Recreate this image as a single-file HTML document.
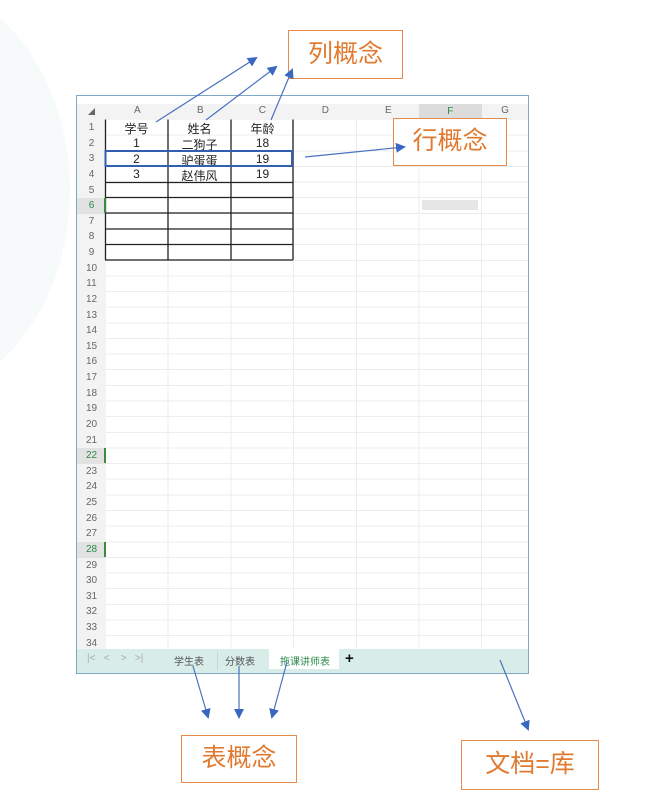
<!DOCTYPE html>
<html><head><meta charset="utf-8"><style>
body{margin:0;width:669px;height:803px;background:#fff;position:relative;overflow:hidden;font-family:"Liberation Sans","Noto Sans CJK SC",sans-serif}
.blob{position:absolute;left:-260px;top:-20px;width:330px;height:420px;border-radius:50%;background:#f6fafa}
.frame{position:absolute;left:76px;top:95px;width:451px;height:577px;border:1.5px solid #7fa8c8;background:#fff}
.colhdr{position:absolute;left:0;top:8px;width:451px;height:16px;background:#f3f3f3}
.colhdr span{position:absolute;top:1px;font-size:10px;color:#666;width:62.7px;text-align:center}
.rowhdr{position:absolute;left:0;top:24px;width:29px;height:530px;background:#f3f3f3}
.rowhdr div{height:15.64px;line-height:15.64px;font-size:10px;color:#666;text-align:center}
.cells{position:absolute;left:29px;top:24px;width:422px;height:530px;
background-image:repeating-linear-gradient(to bottom,transparent 0,transparent 14.64px,#ececec 14.64px,#ececec 15.64px),repeating-linear-gradient(to right,transparent 0,transparent 61.7px,#ececec 61.7px,#ececec 62.7px)}
.tabs{position:absolute;left:0;top:553px;width:451px;height:24px;background:#d8ece8;font-size:10px;color:#555}
.tabs span{position:absolute;top:4px}
.lbl{position:absolute;border:1.5px solid #e9894a;color:#e07a30;font-size:25px;text-align:center;box-sizing:border-box;background:#fff}
.t{position:absolute;font-size:12px;color:#222;text-align:center;width:63px}
svg{z-index:5}
</style></head><body>
<div class="blob"></div>
<div class="frame">
 <div class="colhdr">
  <span style="left:0;width:29px;font-size:7px;top:3px">◢</span>
  <span style="left:29px">A</span><span style="left:92px">B</span><span style="left:154px">C</span><span style="left:217px">D</span><span style="left:280px">E</span>
  <span style="left:342px;background:#dcdcdc;height:15px;color:#2a8a4a;border-bottom:2px solid #3d8a3d;top:0;line-height:16px">F</span><span style="left:405px;width:46px">G</span>
 </div>
 <div class="rowhdr">
  <div>1</div><div>2</div><div>3</div><div>4</div><div>5</div><div style="color:#2a8a4a;background:#e2e2e2">6</div><div>7</div><div>8</div><div>9</div><div>10</div><div>11</div><div>12</div><div>13</div><div>14</div><div>15</div><div>16</div><div>17</div><div>18</div><div>19</div><div>20</div><div>21</div><div style="color:#2a8a4a;background:#e2e2e2">22</div><div>23</div><div>24</div><div>25</div><div>26</div><div>27</div><div style="color:#2a8a4a;background:#e2e2e2">28</div><div>29</div><div>30</div><div>31</div><div>32</div><div>33</div><div>34</div>
 </div>
 <div class="cells"></div>
 <div class="tabs">
  <span style="left:10px;color:#aaa">|&lt;&nbsp;&nbsp;&nbsp;&lt;&nbsp;&nbsp;&nbsp;&nbsp;&gt;&nbsp;&nbsp;&nbsp;&gt;|</span>
  <span style="left:97px">学生表</span>
  <span style="left:140px;top:3px;height:18px;border-left:1px solid #c5d8d4"></span>
  <span style="left:148px">分数表</span>
  <span style="left:192px;top:0;width:70px;height:20px;background:#fff"></span>
  <span style="left:203px;color:#2a8a4a">拖课讲师表</span>
  <span style="left:268px;top:1px;font-size:15px;color:#111;font-weight:bold">+</span>
 </div>
</div>
<div class="t" style="left:105px;top:120px">学号</div><div class="t" style="left:168px;top:120px">姓名</div><div class="t" style="left:231px;top:120px">年龄</div>
<div class="t" style="left:105px;top:136px">1</div><div class="t" style="left:168px;top:136px">二狗子</div><div class="t" style="left:231px;top:136px">18</div>
<div class="t" style="left:105px;top:152px">2</div><div class="t" style="left:168px;top:152px">驴蛋蛋</div><div class="t" style="left:231px;top:152px">19</div>
<div class="t" style="left:105px;top:167px">3</div><div class="t" style="left:168px;top:167px">赵伟风</div><div class="t" style="left:231px;top:167px">19</div>
<div class="lbl" style="left:288px;top:30px;width:115px;height:49px;line-height:46px">列概念</div>
<div class="lbl" style="left:393px;top:118px;width:114px;height:48px;line-height:45px">行概念</div>
<div class="lbl" style="left:181px;top:735px;width:116px;height:48px;line-height:45px">表概念</div>
<div class="lbl" style="left:461px;top:740px;width:138px;height:50px;line-height:47px">文档=库</div>
<svg width="669" height="803" style="position:absolute;left:0;top:0">
 <g stroke="#222" stroke-width="1.3">
  <line x1="105.5" y1="119.5" x2="105.5" y2="260"/><line x1="168" y1="119.5" x2="168" y2="260"/><line x1="231" y1="119.5" x2="231" y2="260"/><line x1="293" y1="119.5" x2="293" y2="260"/>
  <line x1="105" y1="182.5" x2="293" y2="182.5"/><line x1="105" y1="197.5" x2="293" y2="197.5"/><line x1="105" y1="213" x2="293" y2="213"/><line x1="105" y1="229" x2="293" y2="229"/><line x1="105" y1="244.5" x2="293" y2="244.5"/><line x1="105" y1="260" x2="293" y2="260"/>
 </g>
 <rect x="105.5" y="151" width="186.5" height="15" fill="none" stroke="#2f5fae" stroke-width="2"/>
 <rect x="104" y="198" width="2" height="15" fill="#3d8a3d"/>
 <rect x="104" y="448" width="2" height="15" fill="#3d8a3d"/>
 <rect x="104" y="542" width="2" height="15" fill="#3d8a3d"/>
 <rect x="422" y="200" width="56" height="10" fill="#e6e6e6"/>
 <defs><marker id="a" markerWidth="10" markerHeight="10" refX="8" refY="5" orient="auto" markerUnits="userSpaceOnUse"><path d="M0,0 L10,5 L0,10 z" fill="#3a68c0"/></marker></defs>
 <g stroke="#4a72c0" stroke-width="1.2" fill="none" marker-end="url(#a)">
  <line x1="156" y1="122" x2="256" y2="58"/>
  <line x1="206" y1="120" x2="276" y2="67"/>
  <line x1="271" y1="120" x2="292" y2="70"/>
  <line x1="305" y1="157" x2="404" y2="147"/>
  <line x1="193" y1="666" x2="208" y2="717"/>
  <line x1="239" y1="666" x2="239" y2="717"/>
  <line x1="287" y1="662" x2="272" y2="717"/>
  <line x1="500" y1="660" x2="528" y2="729"/>
 </g>
</svg>
</body></html>
